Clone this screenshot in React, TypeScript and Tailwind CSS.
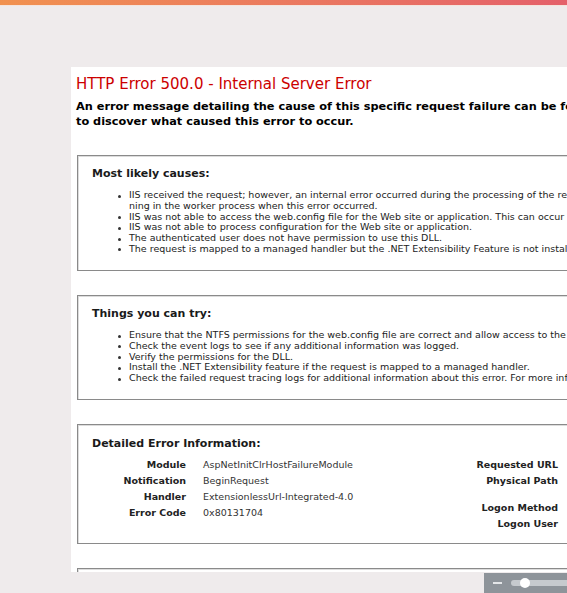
const causes: string[][] = [
  [
    'IIS received the request; however, an internal error occurred during the processing of the request. The root cause of this error depends on which module handles the request and what was happe',
    'ning in the worker process when this error occurred.',
  ],
  ['IIS was not able to access the web.config file for the Web site or application. This can occur if the NTFS permissions are set incorrectly.'],
  ['IIS was not able to process configuration for the Web site or application.'],
  ['The authenticated user does not have permission to use this DLL.'],
  ['The request is mapped to a managed handler but the .NET Extensibility Feature is not installed.'],
];

const tries: string[][] = [
  ["Ensure that the NTFS permissions for the web.config file are correct and allow access to the Web server's machine account."],
  ['Check the event logs to see if any additional information was logged.'],
  ['Verify the permissions for the DLL.'],
  ['Install the .NET Extensibility feature if the request is mapped to a managed handler.'],
  ['Check the failed request tracing logs for additional information about this error. For more information, click here.'],
];

const leftDetails = [
  ['Module', 'AspNetInitClrHostFailureModule'],
  ['Notification', 'BeginRequest'],
  ['Handler', 'ExtensionlessUrl-Integrated-4.0'],
  ['Error Code', '0x80131704'],
];

const rightDetails = [
  ['Requested URL', 'http://localhost:80/', 'h-[16px]'],
  ['Physical Path', 'C:\\inetpub\\wwwroot', 'h-[27px]'],
  ['Logon Method', 'Anonymous', 'h-[16px]'],
  ['Logon User', 'Anonymous', 'h-[16px]'],
];

function BulletList({ items }: { items: string[][] }) {
  return (
    <ul className="mt-[9px] text-[9.5px] leading-[10.8px] text-[#222]">
      {items.map((lines, i) => (
        <li key={i} className="flex">
          <span className="mt-[4.5px] ml-[40px] mr-[8px] h-[3px] w-[3px] shrink-0 rounded-full bg-[#333]" />
          <span className="whitespace-nowrap">
            {lines.map((l, j) => (
              <span key={j} className="block">{l}</span>
            ))}
          </span>
        </li>
      ))}
    </ul>
  );
}

export default function App() {
  return (
    <div className="relative h-[593px] w-[567px] overflow-hidden bg-[#efebec] font-['DejaVu_Sans',sans-serif]">
      <div className="h-[5px] bg-linear-to-r from-[#f1914f] to-[#e4606a]" />
      <div className="h-px bg-[#f4e4dc]" />

      {/* Error page */}
      <div className="ml-[71px] mt-[61px] h-[505px] w-[800px] overflow-hidden bg-white pl-[5px]">
        <h2 className="pt-[8px] text-[15px] leading-[18px] text-[#cc0000] whitespace-nowrap">
          HTTP Error 500.0 - Internal Server Error
        </h2>
        <h3 className="mt-[6px] text-[11.3px] font-bold leading-[15px] text-black whitespace-nowrap">
          An error message detailing the cause of this specific request failure can be found in the application event log of the web server. Please review this log entry
          <br />
          to discover what caused this error to occur.
        </h3>

        <div className="ml-px mt-[26px] h-[116px] border border-[#8a8a8a] pt-[11px] shadow-[inset_1px_1px_0_#dcdcdc]">
          <div className="pl-[14px] text-[11px] font-bold leading-[14px] text-[#1a1a1a]">Most likely causes:</div>
          <BulletList items={causes} />
        </div>

        <div className="ml-px mt-[24px] h-[105px] border border-[#8a8a8a] pt-[11px] shadow-[inset_1px_1px_0_#dcdcdc]">
          <div className="pl-[14px] text-[11px] font-bold leading-[14px] text-[#1a1a1a]">Things you can try:</div>
          <BulletList items={tries} />
        </div>

        <div className="ml-px mt-[24px] h-[120px] border border-[#8a8a8a] pt-[12px] shadow-[inset_1px_1px_0_#dcdcdc]">
          <div className="pl-[14px] text-[11px] font-bold leading-[14px] text-[#1a1a1a]">Detailed Error Information:</div>
          <div className="mt-[6px] flex text-[9.5px] leading-[16px]">
            <div className="w-[362px] shrink-0">
              {leftDetails.map(([k, v]) => (
                <div key={k} className="flex h-[16px]">
                  <div className="w-[108px] shrink-0 text-right font-bold text-[#222]">{k}</div>
                  <div className="ml-[17px] whitespace-nowrap text-[#333]">{v}</div>
                </div>
              ))}
            </div>
            <div>
              {rightDetails.map(([k, v, h]) => (
                <div key={k} className={'flex ' + h}>
                  <div className="w-[118px] shrink-0 text-right font-bold text-[#222]">{k}</div>
                  <div className="ml-[17px] whitespace-nowrap text-[#333]">{v}</div>
                </div>
              ))}
            </div>
          </div>
        </div>

        <div className="ml-px mt-[24px] h-[60px] border border-[#8a8a8a] shadow-[inset_1px_1px_0_#dcdcdc]" />
      </div>

      {/* Zoom control */}
      <div className="absolute bottom-0 right-0 flex h-[20px] w-[83px] items-center bg-[#8e949a]">
        <div className="ml-[9px] h-[2px] w-[9px] bg-[#e4e6e8]" />
        <div className="relative ml-[9px] flex h-[6px] flex-1 items-center rounded-l-full bg-[#c6cace]">
          <div className="ml-[9px] h-[10px] w-[10px] rounded-full bg-white" />
        </div>
      </div>
    </div>
  );
}
